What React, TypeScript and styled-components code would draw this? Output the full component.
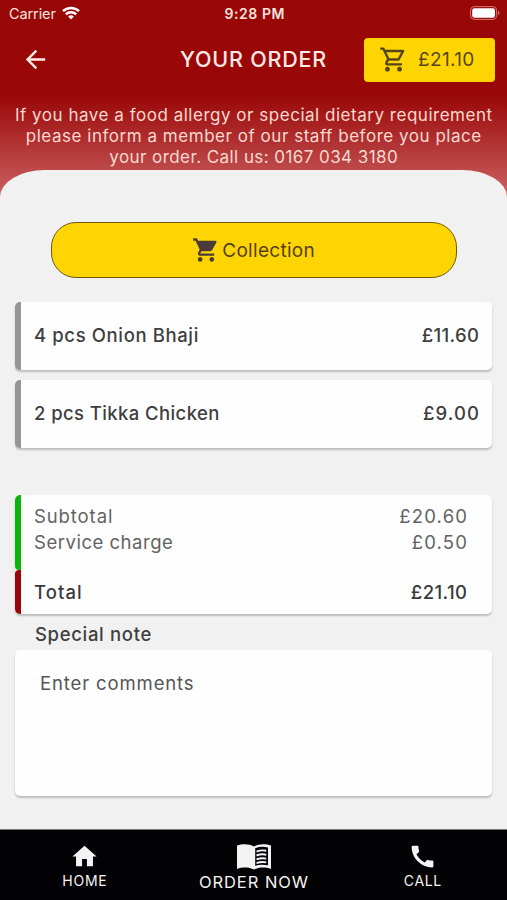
import React from "react";
import styled, { createGlobalStyle } from "styled-components";
import {
  MdArrowBack,
  MdCall,
  MdHome,
  MdOutlineShoppingCart,
  MdShoppingCart,
} from "react-icons/md";

const GlobalStyle = createGlobalStyle`
  *, *::before, *::after { box-sizing: border-box; }
  body { margin: 0; background: #f1f1f1; font-family: Inter, "Open Sans", sans-serif; }
`;

const Screen = styled.div`
  display: flex;
  flex-direction: column;
  width: 507px;
  height: 900px;
  overflow: hidden;
  background: linear-gradient(#9a0707 0, #9a0707 95px, #cb6262 197px, #f1f1f1 197px);
`;

const Label = styled.span<{ $spacing?: number }>`
  letter-spacing: ${(p) => p.$spacing ?? 0.5}px;
  margin-right: ${(p) => -(p.$spacing ?? 0.5)}px;
  white-space: nowrap;
`;

const StatusBar = styled.div`
  display: grid;
  grid-template-columns: 1fr auto 1fr;
  align-items: center;
  flex: none;
  height: 28px;
  padding: 0 7px 0 9px;
  color: #fbe3df;
  font-size: 14.5px;
  line-height: 28px;
`;

const Carrier = styled.div`
  display: flex;
  align-items: center;
  gap: 6px;
`;

const Clock = styled.div`
  font-size: 14px;
  font-weight: 600;
`;

const WifiIcon = styled.svg`
  width: 18px;
  height: 14px;
  margin-top: -2px;
`;

const BatteryIcon = styled.svg`
  width: 30px;
  height: 14px;
  justify-self: end;
  margin-top: -2px;
`;

const TitleBar = styled.header`
  display: flex;
  align-items: center;
  flex: none;
  height: 64px;
  padding: 0 12px 0 21px;
  color: #ffeae6;
`;

const BackButton = styled.button`
  display: flex;
  margin-top: -2px;
  padding: 0;
  border: 0;
  background: none;
  color: inherit;
  font-size: 29px;
`;

const Title = styled.h1`
  margin: -2px 0 0 130px;
  font-size: 21.5px;
  font-weight: 500;
`;

const BasketButton = styled.button`
  display: flex;
  align-items: center;
  gap: 10px;
  width: 131px;
  height: 44px;
  margin-left: auto;
  padding: 0 0 2px 15px;
  border: 0;
  border-radius: 4px;
  background: #fed500;
  color: #554619;
  font: 400 19px Inter, sans-serif;

  svg { font-size: 29px; }
`;

const Notice = styled.p`
  display: flex;
  flex-direction: column;
  align-items: center;
  flex: none;
  height: 78px;
  margin: 0;
  padding-top: 13px;
  color: #fbd9d0;
  font-size: 17px;
  line-height: 21px;
`;

const Panel = styled.main`
  display: flex;
  flex-direction: column;
  flex: 1;
  min-height: 0;
  padding: 52px 15px 0;
  border-radius: 45px 45px 0 0 / 27px 27px 0 0;
  background: #f1f1f1;
  color: #3f3f3f;
  font-size: 18.5px;
`;

const CollectionButton = styled.button`
  display: flex;
  align-items: center;
  justify-content: center;
  gap: 2px;
  flex: none;
  align-self: center;
  width: 406px;
  height: 56px;
  border: 1.5px solid #6a5a16;
  border-radius: 25px;
  background: #fed500;
  color: #554019;
  font: 400 19px Inter, sans-serif;

  svg { font-size: 28px; color: #4b3a3a; }
`;

const Card = styled.section`
  flex: none;
  overflow: hidden;
  border-radius: 5px;
  background: #fefefe;
  box-shadow: 0 2px 2px rgba(0, 0, 0, 0.22);
`;

const ItemList = styled.div`
  display: flex;
  flex-direction: column;
  gap: 10px;
  margin-top: 24px;
`;

const ItemCard = styled(Card)`
  display: flex;
  align-items: center;
  justify-content: space-between;
  height: 68px;
  padding: 0 13px 2px 13px;
  border-left: 6px solid #959595;
  font-weight: 500;
`;

const TotalsCard = styled(Card)`
  height: 119px;
  margin-top: 47px;
`;

const TotalsGroup = styled.div<{ $accent: string; $strong?: boolean }>`
  display: flex;
  flex-direction: column;
  height: ${(p) => (p.$strong ? 44 : 75)}px;
  padding: ${(p) => (p.$strong ? 9 : 8)}px 25px 0 13px;
  border-left: 6px solid ${(p) => p.$accent};
  border-radius: 4px;
  color: ${(p) => (p.$strong ? "#3a3a3a" : "#636363")};
  font-weight: ${(p) => (p.$strong ? 500 : 400)};
`;

const TotalsRow = styled.div`
  display: flex;
  justify-content: space-between;
  line-height: 26px;
`;

const NoteHeading = styled.h2`
  margin: 8px 0 4px 20px;
  font-size: 18.5px;
  font-weight: 500;
  line-height: 24px;
`;

const NoteField = styled(Card)`
  height: 146px;
  padding: 21px 25px;
  color: #555;
  line-height: 24px;
`;

const TabBar = styled.nav`
  display: grid;
  grid-template-columns: repeat(3, 169px);
  flex: none;
  height: 71px;
  border-top: 1px solid #777;
  background: #020103;
  color: #f3f3f3;
`;

const Tab = styled.a<{ $large?: boolean }>`
  display: flex;
  flex-direction: column;
  align-items: center;
  gap: ${(p) => (p.$large ? 1 : 0)}px;
  padding-top: 12px;
  font-size: ${(p) => (p.$large ? 16.5 : 14)}px;
  line-height: ${(p) => (p.$large ? 22 : 20)}px;

  > svg { font-size: 29px; }
`;

const MenuBook = styled.svg`
  width: 34px;
  height: 26px;
  margin-top: 2px;
`;

const items = [
  { name: "4 pcs Onion Bhaji", nameGap: 0.62, price: "£11.60", priceGap: 0.35 },
  { name: "2 pcs Tikka Chicken", nameGap: 0.4, price: "£9.00", priceGap: 1.1 },
];

export default function App() {
  return (
    <>
      <GlobalStyle />
      <Screen>
        <StatusBar>
          <Carrier>
            <Label $spacing={-0.1}>Carrier</Label>
            <WifiIcon viewBox="0 0 18 14" fill="none" stroke="#fff" strokeWidth="2.5">
              <path d="M1 5.2a11.4 11.4 0 0 1 16 0M3.8 8.3a7.4 7.4 0 0 1 10.4 0" />
              <path d="M9 13.5 6.1 10.6a4.1 4.1 0 0 1 5.8 0z" fill="#fff" stroke="none" />
            </WifiIcon>
          </Carrier>
          <Clock><Label $spacing={0.55}>9:28 PM</Label></Clock>
          <BatteryIcon viewBox="0 0 30 14">
            <rect x="0.6" y="0.6" width="26" height="12.8" rx="3.6" fill="none" stroke="#d77873" />
            <rect x="2.2" y="2.2" width="22.8" height="9.6" rx="2.2" fill="#fff" />
            <path d="M28 4.8q3 2.2 0 4.4z" fill="#d77873" />
          </BatteryIcon>
        </StatusBar>

        <TitleBar>
          <BackButton aria-label="Back"><MdArrowBack /></BackButton>
          <Title><Label $spacing={0.8}>YOUR ORDER</Label></Title>
          <BasketButton>
            <MdOutlineShoppingCart />
            <Label $spacing={0.35}>£21.10</Label>
          </BasketButton>
        </TitleBar>

        <Notice>
          <Label $spacing={0.52}>If you have a food allergy or special dietary requirement</Label>
          <Label $spacing={0.53}>please inform a member of our staff before you place</Label>
          <Label $spacing={0.43}>your order. Call us: 0167 034 3180</Label>
        </Notice>

        <Panel>
          <CollectionButton>
            <MdShoppingCart />
            <Label $spacing={0.3}>Collection</Label>
          </CollectionButton>

          <ItemList>
            {items.map((item) => (
              <ItemCard key={item.name}>
                <Label $spacing={item.nameGap}>{item.name}</Label>
                <Label $spacing={item.priceGap}>{item.price}</Label>
              </ItemCard>
            ))}
          </ItemList>

          <TotalsCard>
            <TotalsGroup $accent="#0bb50e">
              <TotalsRow>
                <Label $spacing={0.9}>Subtotal</Label>
                <Label $spacing={1.2}>£20.60</Label>
              </TotalsRow>
              <TotalsRow>
                <Label $spacing={0.52}>Service charge</Label>
                <Label $spacing={1.2}>£0.50</Label>
              </TotalsRow>
            </TotalsGroup>
            <TotalsGroup $accent="#9c0507" $strong>
              <TotalsRow>
                <Label $spacing={1.1}>Total</Label>
                <Label $spacing={0.4}>£21.10</Label>
              </TotalsRow>
            </TotalsGroup>
          </TotalsCard>

          <NoteHeading><Label $spacing={0.67}>Special note</Label></NoteHeading>
          <NoteField><Label $spacing={0.87}>Enter comments</Label></NoteField>
        </Panel>

        <TabBar>
          <Tab>
            <MdHome />
            <Label $spacing={0.8}>HOME</Label>
          </Tab>
          <Tab $large>
            <MenuBook viewBox="0 0 34 26" fill="currentColor">
              <path d="M0 1.6C5.5-.4 12-.4 17 2.4v23.2C12 23 5.5 23 0 25z" />
              <path
                fillRule="evenodd"
                d="M17 2.4C22-.4 28.5-.4 34 1.6V25c-5.5-2-12-2-17 .6zM18.200 4.200v17.600c4-1.400 8-1.500 12.800-.5V3.500c-4.300-1.200-8.500-1-12.800.7z"
              />
              <path
                d="M19.500 7.600c3.300-1.300 6.500-1.500 9.800-.8M19.500 11.500c3.300-1.300 6.500-1.500 9.800-.8M19.500 15.400c3.300-1.300 6.500-1.500 9.800-.8M19.500 19.200c3.300-1.300 6.500-1.500 9.800-.8"
                fill="none"
                stroke="currentColor"
                strokeWidth="1.900"
              />
            </MenuBook>
            <Label $spacing={0.95}>ORDER NOW</Label>
          </Tab>
          <Tab>
            <MdCall />
            <Label $spacing={0.6}>CALL</Label>
          </Tab>
        </TabBar>
      </Screen>
    </>
  );
}
